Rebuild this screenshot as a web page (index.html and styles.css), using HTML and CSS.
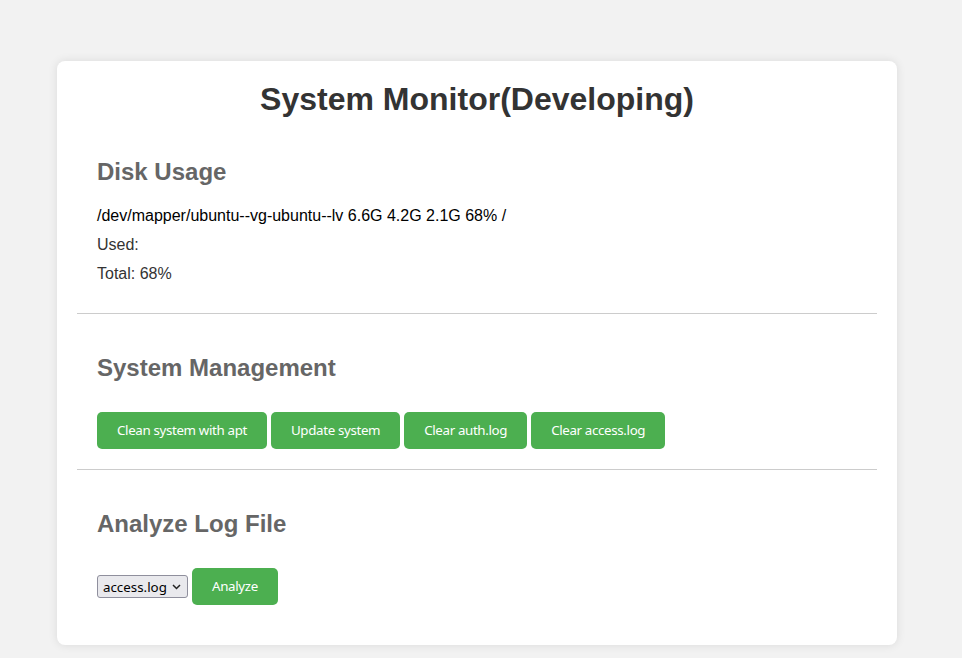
FILE: index.html
```html
<!DOCTYPE html>
<html lang="en">
<head>
<meta charset="utf-8">
<title>System Monitor</title>
<link rel="stylesheet" href="styles.css">
</head>
<body>
<div class="container">
  <h1 class="title">System Monitor(Developing)</h1>
  <section class="section">
    <h2 class="heading">Disk Usage</h2>
    <p class="line line-dark">/dev/mapper/ubuntu--vg-ubuntu--lv 6.6G 4.2G 2.1G 68% /</p>
    <p class="line">Used: </p>
    <p class="line">Total: 68%</p>
  </section>
  <section class="section">
    <h2 class="heading">System Management</h2>
    <div class="actions">
      <button class="btn">Clean system with apt</button>
      <button class="btn">Update system</button>
      <button class="btn">Clear auth.log</button>
      <button class="btn">Clear access.log</button>
    </div>
  </section>
  <section class="section section-last">
    <h2 class="heading">Analyze Log File</h2>
    <div class="actions actions-log">
      <span class="select-wrap">
        <select class="select">
          <option>access.log</option>
          <option>auth.log</option>
        </select>
        <svg class="chevron" width="9" height="6" viewBox="0 0 9 6"><path d="M1 1 L4.5 4.5 L8 1" fill="none" stroke="#222" stroke-width="1.5"/></svg>
      </span>
      <button class="btn">Analyze</button>
    </div>
  </section>
</div>
</body>
</html>
```

FILE: styles.css
```css
html, body {
  margin: 0;
  padding: 0;
}
body {
  background: #f2f2f2;
  font-family: "Liberation Sans", Arial, sans-serif;
  color: #333;
  padding: 61px 8px 0 0;
  min-height: 658px;
  box-sizing: border-box;
}
.container {
  width: 800px;
  margin: 0 auto;
  background: #fff;
  padding: 20px;
  border-radius: 8px;
  box-shadow: 0 0 10px rgba(0, 0, 0, 0.1);
}
.title {
  margin: 0;
  text-align: center;
  font-size: 32px;
  font-weight: bold;
  color: #333;
}
.section {
  padding: 20px;
  border-bottom: 1px solid #ccc;
}
.section-last {
  border-bottom: none;
}
.heading {
  font-size: 24px;
  font-weight: bold;
  color: #666;
  margin: 19.9px 0;
}
.line {
  font-size: 16px;
  line-height: 19.2px;
  margin: 10px 0;
  color: #333;
}
.line-dark {
  color: #000;
}
.actions {
  display: flex;
  gap: 4px;
  margin-top: 30px;
}
.actions-log {
  align-items: center;
  gap: 4px;
}
.btn {
  background: #4caf50;
  color: #fff;
  border: none;
  border-radius: 5px;
  font-family: "Noto Sans", sans-serif;
  font-size: 13.33px;
  letter-spacing: -0.35px;
  line-height: 17px;
  padding: 10px 20px;
  cursor: pointer;
}
.select-wrap {
  position: relative;
  display: inline-block;
}
.select {
  appearance: none;
  -webkit-appearance: none;
  width: 91px;
  height: 23px;
  box-sizing: border-box;
  background: #e9e9ed;
  border: 1px solid #8f8f9d;
  border-radius: 3px;
  font-family: "Noto Sans", sans-serif;
  font-size: 13.33px;
  color: #000;
  padding: 0 0 0 5px;
  display: block;
}
.chevron {
  position: absolute;
  right: 7px;
  top: 9px;
  pointer-events: none;
}
```
